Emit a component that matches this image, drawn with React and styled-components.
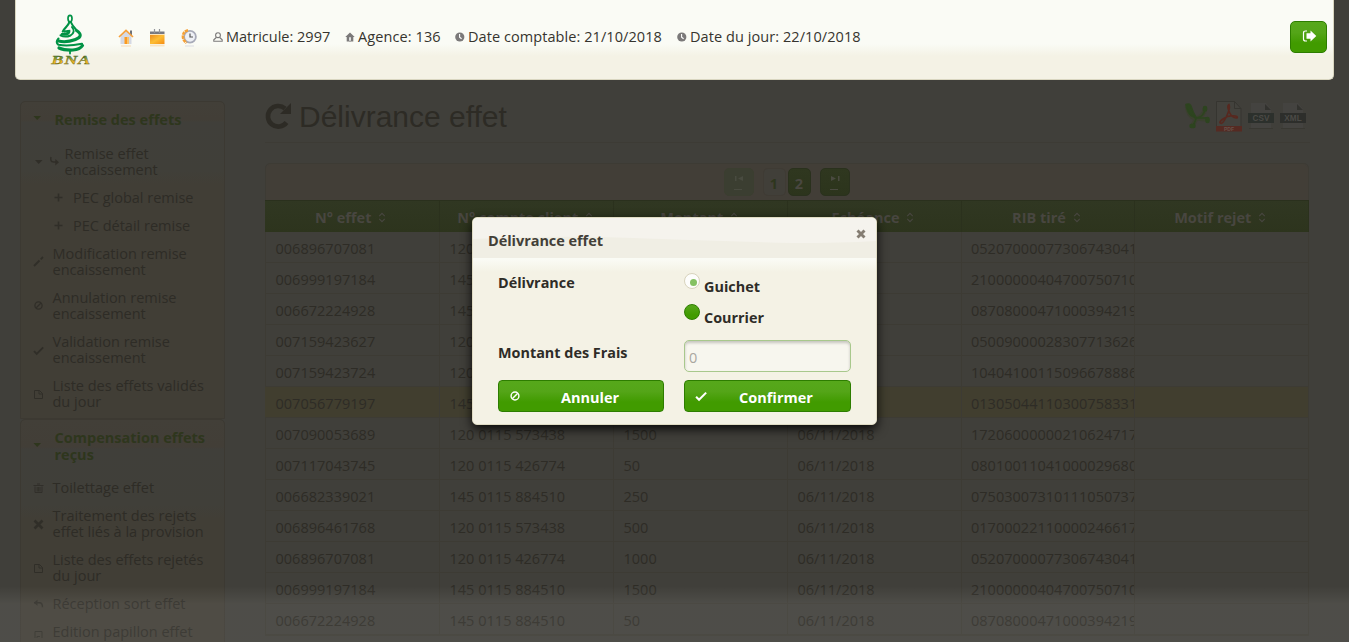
import React from "react";
import styled, { createGlobalStyle } from "styled-components";

const Global = createGlobalStyle`
  *, *::before, *::after { box-sizing: border-box; }
  html, body { margin: 0; padding: 0; background: #403f3a; }
  body { font-family: "Open Sans", "Noto Sans", sans-serif; font-size: 14.5px; color: #2e2c26; overflow: hidden; }
`;

const Page = styled.div`
  position: relative;
  width: 1349px;
  height: 642px;
  overflow: hidden;
  background: #403f3a;
`;

/* ---------- top bar ---------- */
const TopBar = styled.header`
  display: flex;
  align-items: center;
  width: 1319px;
  height: 80px;
  margin-left: 15px;
  padding: 0 6px 6px 34px;
  border: 1px solid #d9d6c0;
  border-top: 0;
  border-radius: 0 0 5px 5px;
  background: linear-gradient(#fafbf5 0, #fafbf5 44px, #f4f2e5 56px, #f4f2e5 100%);
`;
const Logo = styled.svg`
  display: block;
  width: 42px;
  height: 54px;
  margin-top: 8px;
  flex: none;
`;
const Shortcuts = styled.nav`
  display: flex;
  gap: 15.5px;
  margin: 2px 16.5px 0 25.5px;
  svg { display: block; width: 16px; height: 20px; }
`;
const Info = styled.span`
  display: flex;
  align-items: center;
  width: ${(p) => p.$w}px;
  white-space: nowrap;
  color: #36342e;
  letter-spacing: ${(p) => p.$ls || 0}px;
  svg { width: 10px; height: 10px; margin: 0 3px 0 0; flex: none; }
`;
const Logout = styled.button`
  display: flex;
  align-items: center;
  justify-content: center;
  width: 37px;
  height: 32px;
  margin-left: auto;
  padding: 0 0 1px 2px;
  border: 1px solid #2d7d00;
  border-radius: 5px;
  background: linear-gradient(#56a81b, #54a518 35%, #419b00 70%);
`;

/* ---------- body ---------- */
const Body = styled.div`
  display: flex;
  align-items: flex-start;
  gap: 40px;
  padding-left: 20px;
`;
const Sidebar = styled.aside`
  width: 205px;
  flex: none;
  padding-top: 21px;
`;
const Panel = styled.section`
  height: ${(p) => p.$h}px;
  border: 1px solid #3c3932;
  border-radius: 5px 5px 0 0;
  background: linear-gradient(#423f38 0, #423e37 ${(p) => p.$a}px, #403f3a ${(p) => p.$a + 2}px, #403f39 ${(p) => p.$b}px, #413e36 ${(p) => p.$b + 14}px, #413e36 100%);
`;
const PanelTitle = styled.h3`
  display: flex;
  align-items: center;
  height: ${(p) => p.$h}px;
  margin: 0;
  padding: 0 0 ${(p) => p.$pb}px 11px;
  font-size: 14.5px;
  line-height: 17px;
  font-weight: 700;
  color: #2e361d;
  svg { width: 10px; margin-right: 12.5px; margin-top: ${(p) => p.$up || 0}px; flex: none; }
`;
const Item = styled.div`
  display: flex;
  align-items: center;
  height: ${(p) => (p.$two ? 44.2 : 28)}px;
  padding: 0 0 3px ${(p) => (p.$depth === 2 ? 31.5 : 11.5)}px;
  line-height: 16px;
  font-size: 14.5px;
  white-space: pre-line;
  svg { width: 11px; height: 11px; margin-right: ${(p) => p.$gap || 9}px; flex: none; }
`;
const Main = styled.main`width: 1045px; flex: none;`;
const Heading = styled.div`
  display: flex;
  align-items: center;
  height: 63px;
  padding-top: 10px;
  border-bottom: 1px solid #3d3b35;
`;
const Title = styled.h1`
  margin: 1px auto 0 7px;
  font: 400 30px/34px "Liberation Sans", Arial, sans-serif;
  color: #2d2b25;
`;
const Exports = styled.div`
  display: flex;
  gap: 4px;
  padding-right: 3px;
  svg { display: block; width: 28px; height: 32px; }
`;
const TableBox = styled.div`
  width: 1044px;
  margin-top: 20px;
  border: 1px solid #3d3b34;
  border-radius: 5px 5px 0 0;
`;
const Paginator = styled.div`
  display: flex;
  justify-content: center;
  align-items: center;
  height: 36px;
  background: #423e37;
  border-radius: 5px 5px 0 0;
  padding-right: 1px;
`;
const PageBtn = styled.span`
  display: flex;
  align-items: center;
  justify-content: center;
  width: ${(p) => p.$w || 23}px;
  height: 28px;
  margin-left: ${(p) => p.$ml || 0}px;
  padding-top: 2px;
  border: 1px solid ${(p) => (p.$plain ? "#3f3b34" : p.$off ? "#3b3e30" : "#2a311d")};
  border-radius: 5px;
  font-weight: 700;
  font-size: 14.5px;
  color: ${(p) => (p.$plain ? "#2e361d" : "#494740")};
  background: ${(p) => (p.$plain ? "#413f39" : p.$off ? "#3b3e31" : "linear-gradient(#2f371f, #2c341c)")};
`;
const Grid = styled.div`
  display: grid;
  grid-template-columns: 175px 174px 174px 173.5px 173.5px 174px;
  width: 1044px;
  margin-left: -1px;
`;
const Th = styled.div`
  display: flex;
  align-items: center;
  justify-content: center;
  height: 32px;
  padding: 1px 2.5px 0 0;
  border-top: 1px solid #2a301d;
  border-right: 1px solid #2b311d;
  background: linear-gradient(#303722, #2d341d);
  color: #484640;
  font-weight: 700;
  svg { width: 8px; height: 11px; margin-left: 7px; margin-top: 1px; }
`;
const Td = styled.div`
  height: 31px;
  padding: 2px 0 0 ${(p) => (p.$first ? 10.5 : 9.5)}px;
  border-bottom: 1px solid #3d3b34;
  border-right: 1px solid #3d3b34;
  line-height: 30px;
  letter-spacing: .02px;
  white-space: nowrap;
  overflow: hidden;
  background: ${(p) => (p.$on ? "#413e2f" : "transparent")};
`;
const BottomHaze = styled.div`
  position: absolute;
  left: 0;
  right: 0;
  bottom: 0;
  height: 56px;
  background: linear-gradient(rgba(255,255,255,0), rgba(255,255,255,.075) 18px);
`;

/* ---------- dialog ---------- */
const Dialog = styled.div`
  position: absolute;
  left: 472px;
  top: 217px;
  width: 405px;
  height: 208px;
  border: 1px solid #e0dcc4;
  border-radius: 5px;
  background: linear-gradient(#fafbf5 41px, #f4f2e5 54px);
  box-shadow: 0 4px 11px rgba(0,0,0,.85);
  color: #2e2c27;
  font-weight: 700;
`;
const DialogHead = styled.div`
  position: relative;
  display: flex;
  justify-content: space-between;
  height: 40px;
  padding: 12px 10px 0 15px;
  border-radius: 5px 5px 0 0;
  overflow: hidden;
  background: #f5f3ed;
  font-size: 14.5px;
  line-height: 22px;
  color: #433f38;
`;
const Wave = styled.svg`
  position: absolute;
  left: 0;
  bottom: 0;
  width: 403px;
  height: 22px;
`;
const HeadText = styled.span`position: relative; letter-spacing: -.05px;`;
const CloseIcon = styled.svg`position: relative; width: 10px; height: 10px; margin-top: -1px;`;
const Form = styled.div`
  display: grid;
  grid-template-columns: 166px 167px;
  column-gap: 20px;
  padding: 13px 0 0 25px;
  font-size: 14.4px;
`;
const Label = styled.div`
  padding-top: ${(p) => p.$pt}px;
  line-height: 20px;
`;
const Radios = styled.div`height: 69px;`;
const RadioRow = styled.div`
  display: flex;
  height: 31px;
  padding-top: 2px;
  line-height: 28px;
`;
const Dot = styled.span`
  display: flex;
  align-items: center;
  justify-content: center;
  width: 16px;
  height: 16px;
  margin-right: 4px;
  flex: none;
  border-radius: 50%;
  border: 1px solid ${(p) => (p.$on ? "#d8d3bd" : "#2d7d00")};
  background: ${(p) => (p.$on ? "#fdfdfb" : "linear-gradient(#56a81b, #419b00 70%)")};
  &::after {
    content: "";
    width: 7.5px;
    height: 7.5px;
    margin: 3px 0 0 3px;
    border-radius: 50%;
    background: ${(p) => (p.$on ? "#84c162" : "transparent")};
  }
`;
const Field = styled.input`
  width: 167px;
  height: 32px;
  padding: 2px 4px 0;
  border: 1px solid #a8c88c;
  border-radius: 5px;
  background: #f7f6ee;
  box-shadow: inset 0 2px 3px rgba(0,0,0,.2);
  font: 400 14.5px "Open Sans", sans-serif;
  color: #a9a79f;
`;
const Action = styled.button`
  display: flex;
  align-items: center;
  height: 32px;
  margin-top: 8px;
  padding: 2px 0 0 10px;
  border: 1px solid #2d7d00;
  border-radius: 4px;
  background: linear-gradient(#56a81b, #54a518 35%, #419b00 70%);
  color: #fff;
  font: 700 14.5px "Open Sans", sans-serif;
  svg { width: 12px; height: 12px; margin-top: -3px; flex: none; }
  span { flex: 1; text-align: center; padding-right: ${(p) => p.$pr || 0}px; }
`;

/* ---------- glyphs ---------- */
const I = ({ children, c = "#302e28" }) => (
  <svg viewBox="0 0 11 11" fill="none" stroke={c} strokeWidth="1.3">{children}</svg>
);
const ban = (c) => <I c={c}><circle cx="5.5" cy="5.5" r="3.6" /><path d="M3 8l5-5" /></I>;
const check = (c) => <I c={c}><path d="M1 6.200l2.700 2.700 6.500-6.500" strokeWidth="1.900" /></I>;
const glyphs = {
  plus: <I><path d="M5.500 1.500v8M1.500 5.500h8" strokeWidth="1.600" /></I>,
  pencil: <I><path d="M1 10l5.500-5.500M7.700 3.300L10 1" strokeWidth="1.800" /></I>,
  ban: ban(),
  check: check(),
  doc: <I><path d="M1.500 1.500h5l3 3v5h-8zM6 1.500v3.500h3.500" strokeWidth="1" /></I>,
  trash: <I><path d="M.5 2.500h10M4 1h3M2 3.500v6h7v-6M4.200 4v4.500M5.600 4v4.500M7 4v4.500" strokeWidth=".9" /></I>,
  cross: <I><path d="M1.500 1.500l8 8M9.500 1.500l-8 8" strokeWidth="2.600" /></I>,
  reply: <I><path d="M1 3.800h5.500q3 0 3 4.500" strokeWidth="1.400" /><path d="M4.500.8v6L.8 3.800z" fill="#302e28" stroke="none" /></I>,
  bookmark: <I><path d="M2 11V4.500h7V11M4 11V9.500h3" strokeWidth="1" /></I>,
  sub: <I><path d="M2 1Q.8 5.800 4.500 6h3" strokeWidth="1.400" /><path d="M6.300 3v6.500L10 6.200z" fill="#302e28" stroke="none" /></I>,
};
const Caret = ({ c = "#302e28" }) => (
  <svg viewBox="0 0 10 6" style={{ height: 6 }}><path d="M1.500 1h7.500L5.200 5z" fill={c} /></svg>
);
const Sort = () => (
  <svg viewBox="0 0 8 12" fill="none" stroke="#484640" strokeWidth="1.200"><path d="M1 4.500l3-3 3 3M1 7.500l3 3 3-3" /></svg>
);
const Clock = () => (
  <svg viewBox="0 0 10 10"><circle cx="4.800" cy="5" r="4.600" fill="#7b7979" /><path d="M4.600 2v3.200l2 1.600" fill="none" stroke="#fff" strokeWidth="1.100" /></svg>
);

const BnaLogo = () => (
  <Logo viewBox="0 0 42 54">
    <defs>
      <linearGradient id="gold" x1="0" y1="0" x2="0" y2="1">
        <stop offset="0" stopColor="#14813f" /><stop offset=".42" stopColor="#8c9a2c" /><stop offset=".6" stopColor="#f0b41f" /><stop offset="1" stopColor="#f5b51b" />
      </linearGradient>
    </defs>
    <g fill="none" stroke="#009245" strokeLinecap="round">
      <ellipse cx="20" cy="4.600" rx="2" ry="3.300" strokeWidth="1.700" />
      <path d="M19.300 8.200C18 12.500 14 14 12.800 17.500" strokeWidth="2.200" />
      <path d="M20.800 8.200Q22.500 12 26 15.500" strokeWidth="2" />
      <path d="M22 13Q26 18 20.500 21.500Q15 23.800 10.500 21.300" strokeWidth="2" />
      <path d="M14.500 17.500q4.500 0 4.500-1.500q1 5-7 4.300" strokeWidth="2.600" />
      <path d="M26.500 16.500Q34.500 22 25.500 25.500Q16 29 8.500 27" strokeWidth="3" />
      <path d="M8.500 24.500Q5 28.500 8.500 30.800Q18 32.500 32 29.800" strokeWidth="2.100" />
      <path d="M32.500 31.500Q30 35.500 23 36Q14 36.300 9 34" strokeWidth="3.200" />
      <path d="M20 37v2.500" strokeWidth="1.800" />
    </g>
    <text transform="translate(1.300 50.400) scale(1.380 1)" letterSpacing=".5" fontFamily="Liberation Serif, serif" fontWeight="700" fontStyle="italic" fontSize="13.200" fill="url(#gold)" stroke="#4b5a24" strokeWidth=".3">BNA</text>
  </Logo>
);
const HomeColor = () => (
  <svg viewBox="0 0 16 20">
    <path d="M12 2.500h2V8h-2z" fill="#6d7078" />
    <path d="M2.500 8L8 3l5.500 5v8h-11z" fill="#d5d9e4" />
    <path d="M6.500 9H11v7H6.500z" fill="#fb9a20" /><path d="M9 9h2v7H9z" fill="#f9c36e" />
    <path d="M1 9L8 2.500 15 9" fill="none" stroke="#f6a13c" strokeWidth="1.700" />
    <path d="M3 17h10v2H3z" fill="#f5d9b5" opacity=".5" />
  </svg>
);
const Calendar = () => (
  <svg viewBox="0 0 16 20">
    <defs>
      <linearGradient id="cal" x1="0" y1="0" x2="1" y2="1">
        <stop offset="0" stopColor="#e98a1f" /><stop offset=".5" stopColor="#fdbd33" /><stop offset="1" stopColor="#f58c13" />
      </linearGradient>
    </defs>
    <path d="M1 3.500h14.500v2.500H1z" fill="#777980" /><path d="M5.500 1v4M10.500 1v4" stroke="#92949a" strokeWidth="1.200" />
    <path d="M1 6.500h14.500V16H1z" fill="url(#cal)" /><path d="M1 6h14.500v1H1z" fill="#fde3b5" /><path d="M1 16.500h14.500v2H1z" fill="#f8d6a4" opacity=".6" />
  </svg>
);
const History = () => (
  <svg viewBox="0 0 16 20">
    <circle cx="9" cy="8.700" r="5.900" fill="#eef0f5" stroke="#a7aab8" strokeWidth="1.800" />
    <path d="M9 5.500V9h3" fill="none" stroke="#555" strokeWidth="1.200" />
    <path d="M7 2.300Q1.500 3.500 2 9.500Q2.500 13 5.500 15" fill="none" stroke="#f6a034" strokeWidth="2.600" strokeDasharray="3.200 .7" />
    <path d="M4 18h9" stroke="#d8dae2" strokeWidth="1.500" opacity=".6" />
  </svg>
);
const FileBadge = ({ label, tone }) => (
  <svg viewBox="0 0 28 32">
    <path d="M4 3h15l5 6v19H4z" fill="#444340" /><path d="M18 4l6 6h-6z" fill="#32322e" />
    <path d="M1 13h26v10H1z" fill={tone} /><path d="M2 28.500h24" stroke="#393832" />
    <text x="14" y="21.200" textAnchor="middle" fontFamily="Liberation Sans, sans-serif" fontWeight="700" fontSize="8.200" fill="#4b4a46">{label}</text>
  </svg>
);

const rows = [
  ["006896707081", "120 0115 426774", "1000", "05207000077306743041"],
  ["006999197184", "145 0115 884510", "1500", "21000000404700750710"],
  ["006672224928", "145 0115 884510", "50", "08708000471000394219"],
  ["007159423627", "120 0115 573438", "250", "05009000028307713626"],
  ["007159423724", "120 0115 426774", "500", "10404100115096678886"],
  ["007056779197", "145 0115 884510", "1000", "01305044110300758331"],
  ["007090053689", "120 0115 573438", "1500", "17206000000210624717"],
  ["007117043745", "120 0115 426774", "50", "08010011041000029680"],
  ["006682339021", "145 0115 884510", "250", "07503007310111050737"],
  ["006896461768", "120 0115 573438", "500", "01700022110000246617"],
  ["006896707081", "120 0115 426774", "1000", "05207000077306743041"],
  ["006999197184", "145 0115 884510", "1500", "21000000404700750710"],
  ["006672224928", "145 0115 884510", "50", "08708000471000394219"],
];
const heads = ["N° effet", "N° compte client", "Montant", "Echéance", "RIB tiré", "Motif rejet"];

const remise = [
  ["pencil", "Modification remise\nencaissement"],
  ["ban", "Annulation remise\nencaissement"],
  ["check", "Validation remise\nencaissement"],
  ["doc", "Liste des effets validés\ndu jour"],
];
const compensation = [
  ["trash", "Toilettage effet"],
  ["cross", "Traitement des rejets\neffet liés à la provision"],
  ["doc", "Liste des effets rejetés\ndu jour"],
  ["reply", "Réception sort effet"],
  ["bookmark", "Edition papillon effet"],
];
const MenuItem = ({ icon, text, ...rest }) => (
  <Item $two={text.includes("\n")} {...rest}>{glyphs[icon]}<span>{text}</span></Item>
);

export default function App() {
  return (
    <Page>
      <Global />
      <TopBar>
        <BnaLogo />
        <Shortcuts><HomeColor /><Calendar /><History /></Shortcuts>
        <Info $w={132}>
          <svg viewBox="0 0 10 10" fill="none" stroke="#7b7979" strokeWidth="1.100"><circle cx="5" cy="3.200" r="2.400" /><path d="M3.300 5.500L.8 7.800v1.500h8.400V7.800L6.700 5.500" /></svg>
          Matricule: 2997
        </Info>
        <Info $w={110} $ls={0.1}>
          <svg viewBox="0 0 10 10"><path d="M5 .5L.3 5h1.400v4.500h6.600V5h1.400z" fill="#7b7979" /><path d="M4 5h2v4H4z" fill="#fff" stroke="#7b7979" strokeWidth=".5" /></svg>
          Agence: 136
        </Info>
        <Info $w={222} $ls={0.07}><Clock />Date comptable: 21/10/2018</Info>
        <Info $w={190} $ls={0.07}><Clock />Date du jour: 22/10/2018</Info>
        <Logout>
          <svg width="15" height="12" viewBox="0 0 15 12"><path d="M5 1H3.500Q1.500 1 1.500 3v6q0 2 2 2H5" fill="none" stroke="#fff" strokeWidth="1.200" /><path d="M4.500 3.200h4V.6L14.300 6l-5.800 5.400V8.800h-4z" fill="#fff" /></svg>
        </Logout>
      </TopBar>

      <Body>
        <Sidebar>
          <Panel $h={318} $a={18} $b={68}>
            <PanelTitle $h={39} $pb={4} $up={-3}><Caret c="#2e361d" />Remise des effets</PanelTitle>
            <Item $two $gap={5}>
              <Caret />
              {glyphs.sub}
              <span>{"Remise effet\nencaissement"}</span>
            </Item>
            <MenuItem icon="plus" text="PEC global remise" $depth={2} $gap={9.5} />
            <MenuItem icon="plus" text="PEC détail remise" $depth={2} $gap={9.5} />
            {remise.map(([i, t]) => <MenuItem key={t} icon={i} text={t} />)}
          </Panel>
          <Panel $h={260} $a={27} $b={85}>
            <PanelTitle $h={55.5} $pb={4} $up={-1}><Caret c="#2e361d" /><span>Compensation effets<br />reçus</span></PanelTitle>
            {compensation.map(([i, t]) => <MenuItem key={t} icon={i} text={t} />)}
          </Panel>
        </Sidebar>

        <Main>
          <Heading>
            <svg width="27" height="28" viewBox="0 0 27 28"><path d="M21.500 20.500A10.300 10.300 0 1 1 20 6.500" fill="none" stroke="#2d2b25" strokeWidth="4.600" /><path d="M26 1v11H15z" fill="#2d2b25" /></svg>
            <Title>Délivrance effet</Title>
            <Exports>
              <svg viewBox="0 0 28 32">
                <g fill="none" strokeLinecap="round" strokeLinejoin="round">
                  <path d="M4 6Q5 15 11 18L24 19.500M9.500 25.500l4-7Q21 16 22 8.500" stroke="#3b402f" strokeWidth="4.500" />
                  <path d="M3 4.500q4-2 5.500 3t4.500 10Q5 17 3 4.500z" fill="#2d441f" stroke="#2d441f" strokeWidth="1.500" />
                  <path d="M12 18h12.500M13 18q8-1 9-9M10 26l3-7" stroke="#2d441f" strokeWidth="1.600" />
                  <path d="M22 8v1.500M24.500 19v2M8.500 26h2" stroke="#2d441f" strokeWidth="4.500" />
                </g>
              </svg>
              <svg viewBox="0 0 28 32">
                <path d="M1.500 1.500h18l6.500 7V30h-24.500z" fill="#43423d" stroke="#363530" /><path d="M19.500 1.500v7H26" fill="none" stroke="#363530" />
                <path d="M14 4.500q-2.500 1 .3 7.500t7.700 6q1.500-2-4-2.200T8 19t-2.500 4q2 1.800 6-6.500T14 4.500z" fill="none" stroke="#57281f" strokeWidth="1.600" />
                <path d="M1 26h26v5.500H1z" fill="#552a22" />
                <text x="14" y="30.600" textAnchor="middle" fontFamily="Liberation Sans, sans-serif" fontSize="5" fontWeight="700" fill="#68534b">PDF</text>
              </svg>
              <FileBadge label="CSV" tone="#2c302c" />
              <FileBadge label="XML" tone="#2d2e2b" />
            </Exports>
          </Heading>
          <TableBox>
            <Paginator>
              <PageBtn $w={30} $off>
                <svg width="12" height="18" viewBox="0 0 12 18" fill="#494b40"><path d="M2 2h1.500v5H2zM10 2v5L5 4.500zM1 15h8v1H1z" /></svg>
              </PageBtn>
              <PageBtn $plain $ml={9}>1</PageBtn>
              <PageBtn $ml={2}>2</PageBtn>
              <PageBtn $w={30} $ml={9}>
                <svg width="12" height="18" viewBox="0 0 12 18" fill="#4a4a40"><path d="M9 2h1.500v5H9zM2 2v5l5-2.500zM1 15h8v1H1z" /></svg>
              </PageBtn>
            </Paginator>
            <Grid>
              {heads.map((h) => <Th key={h}>{h}<Sort /></Th>)}
              {rows.map(([n, c, m, r], i) =>
                [n, c, m, "06/11/2018", r, ""].map((v, j) => <Td key={i + "-" + j} $first={j === 0} $on={i === 5}>{v}</Td>)
              )}
            </Grid>
          </TableBox>
        </Main>
      </Body>

      <BottomHaze />

      <Dialog>
        <DialogHead>
          <Wave viewBox="0 0 403 22" preserveAspectRatio="none"><path d="M0 3Q80-1 160 2T320 7Q370 7 403 5V22H0z" fill="#f0eee4" /></Wave>
          <HeadText>Délivrance effet</HeadText>
          <CloseIcon viewBox="0 0 10 10"><path d="M1.500 1.500l7 7M8.500 1.500l-7 7" stroke="#857d72" strokeWidth="2.900" /></CloseIcon>
        </DialogHead>
        <Form>
          <Label $pt={2}>Délivrance</Label>
          <Radios>
            <RadioRow><Dot $on />Guichet</RadioRow>
            <RadioRow><Dot />Courrier</RadioRow>
          </Radios>
          <Label $pt={3}>Montant des Frais</Label>
          <Field defaultValue="0" />
          <Action $pr={4}>{ban("#fff")}<span>Annuler</span></Action>
          <Action $pr={5}>{check("#fff")}<span>Confirmer</span></Action>
        </Form>
      </Dialog>
    </Page>
  );
}
